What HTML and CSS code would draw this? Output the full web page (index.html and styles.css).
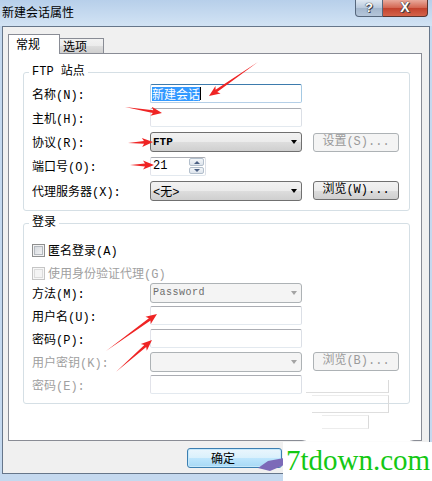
FILE: index.html
```html
<!DOCTYPE html>
<html lang="zh-CN">
<head>
<meta charset="utf-8">
<title>新建会话属性</title>
<link rel="stylesheet" href="styles.css">
</head>
<body>
<div class="titlebar">
  <span class="title">新建会话属性</span>
  <div class="caption">
    <div class="cbtn help">?</div>
    <div class="cbtn close">X</div>
  </div>
</div>
<div class="frame">
  <div class="tabs">
    <div class="tab active">常规</div>
    <div class="tab">选项</div>
  </div>
  <div class="panel">
    <div class="group g1">
      <div class="gtitle">FTP 站点</div>
      <div class="rows">
        <div class="row">
          <span class="lbl">名称(N):</span>
          <div class="tb focus"><span class="sel">新建会话</span><span class="caret"></span></div>
        </div>
        <div class="row">
          <span class="lbl">主机(H):</span>
          <div class="tb"></div>
        </div>
        <div class="row">
          <span class="lbl">协议(R):</span>
          <div class="dd"><span class="ddtext bold">FTP</span><span class="arrow"></span></div>
          <div class="btn disabled">设置(S)...</div>
        </div>
        <div class="row">
          <span class="lbl">端口号(O):</span>
          <div class="tb spin"><span class="num">21</span>
            <div class="spinbtns"><span class="sb up"></span><span class="sb down"></span></div>
          </div>
        </div>
        <div class="row">
          <span class="lbl">代理服务器(X):</span>
          <div class="dd"><span class="ddtext">&lt;无&gt;</span><span class="arrow"></span></div>
          <div class="btn">浏览(W)...</div>
        </div>
      </div>
    </div>
    <div class="group g2">
      <div class="gtitle">登录</div>
      <div class="cbrow first"><span class="cb"></span><span>匿名登录(A)</span></div>
      <div class="cbrow second disabled"><span class="cb"></span><span>使用身份验证代理(G)</span></div>
      <div class="rows tight">
        <div class="row">
          <span class="lbl">方法(M):</span>
          <div class="dd disabled"><span class="ddtext mono">Password</span><span class="arrow"></span></div>
        </div>
        <div class="row">
          <span class="lbl">用户名(U):</span>
          <div class="tb"></div>
        </div>
        <div class="row">
          <span class="lbl">密码(P):</span>
          <div class="tb"></div>
        </div>
        <div class="row disabled">
          <span class="lbl">用户密钥(K):</span>
          <div class="dd disabled"><span class="ddtext"></span><span class="arrow"></span></div>
          <div class="btn disabled">浏览(B)...</div>
        </div>
        <div class="row disabled">
          <span class="lbl">密码(E):</span>
          <div class="tb"></div>
        </div>
      </div>
    </div>
  </div>
  <div class="footer">
    <div class="okbtn">确定</div>
  </div>
</div>

<div class="ghost g-a"></div>
<div class="ghost g-b"></div>
<div class="ghost g-c"></div>
<div class="smudge"></div>

<svg class="arrows" width="432" height="481" viewBox="0 0 432 481">
  <g fill="#ef2424">
    <g transform="translate(209 96) rotate(145.2)"><path d="M0,0 L-11,-4.5 L-9,-1.4 L-59.6,0 L-9,1.4 L-11,4.5Z"/></g>
    <g transform="translate(162 113) rotate(9.2)"><path d="M0,0 L-11,-4.5 L-9,-1.4 L-37.5,0 L-9,1.4 L-11,4.5Z"/></g>
    <g transform="translate(153 142) rotate(-2.3)"><path d="M0,0 L-11,-4.5 L-9,-1.4 L-25,0 L-9,1.4 L-11,4.5Z"/></g>
    <g transform="translate(154 165) rotate(0)"><path d="M0,0 L-11,-4.5 L-9,-1.4 L-24,0 L-9,1.4 L-11,4.5Z"/></g>
    <g transform="translate(157 314) rotate(-36)"><path d="M0,0 L-11,-4.5 L-9,-1.4 L-63,0 L-9,1.4 L-11,4.5Z"/></g>
    <g transform="translate(152 340) rotate(-41.6)"><path d="M0,0 L-11,-4.5 L-9,-1.4 L-48,0 L-9,1.4 L-11,4.5Z"/></g>
  </g>
  <polygon points="258,468 268,461 284,458 284,465 270,471" fill="#7c6ab8"/>
</svg>
<div class="watermark">7tdown.com</div>
</body>
</html>
```
FILE: styles.css
```css
* { box-sizing: border-box; }
html, body { margin: 0; padding: 0; }
body {
  width: 432px;
  height: 481px;
  overflow: hidden;
  position: relative;
  background: #c5d9ef;
  font-family: "Liberation Mono", "Noto Sans CJK SC", monospace;
  font-size: 12px;
  color: #000;
}
.titlebar {
  height: 26px;
  display: flex;
  align-items: flex-start;
  background: linear-gradient(#b7cfea, #d2e3f4);
}
.title {
  font-family: "Noto Sans CJK SC", sans-serif;
  line-height: 23px;
  padding-left: 2px;
}
.caption {
  margin-left: auto;
  margin-right: 4px;
  display: flex;
  height: 17px;
}
.cbtn {
  height: 17px;
  border: 1px solid #56677c;
  border-top: none;
  font-family: "Liberation Sans", sans-serif;
  font-weight: bold;
  color: #fff;
  text-align: center;
  line-height: 15px;
  text-shadow: 0 0 1px #333, 0 0 1px #333, 1px 1px 0 #445;
}
.help {
  width: 28px;
  border-radius: 0 0 0 4px;
  background: linear-gradient(#dfe8f2, #b8c8db 50%, #a3b6cc 51%, #b5c6da);
  font-size: 13px;
}
.close {
  width: 45px;
  border-left: none;
  border-color: #5a3530;
  border-radius: 0 0 4px 0;
  background: linear-gradient(#e9aa9c, #d3644f 50%, #c2412c 51%, #d4634a);
  font-size: 14px;
}
.frame {
  margin: 0 2px;
  height: 448px;
  border: 1px solid #66768a;
  background: #f0f0f0;
}
.tabs {
  display: flex;
  align-items: flex-end;
  height: 26px;
  padding-left: 5px;
  font-family: "Noto Sans CJK SC", sans-serif;
}
.tab {
  border: 1px solid #898c95;
  border-bottom: none;
}
.tab.active {
  width: 52px;
  height: 20px;
  margin-bottom: -1px;
  background: #fff;
  position: relative;
  z-index: 1;
  padding-left: 7px;
  line-height: 18px;
}
.tab:not(.active) {
  width: 44px;
  height: 15px;
  padding-left: 3px;
  line-height: 14px;
  border-left: none;
  background: linear-gradient(#f2f2f2, #ebebeb 50%, #dddddd 51%, #cfcfcf);
}
.panel {
  margin-left: 5px;
  width: 414px;
  height: 388px;
  border: 1px solid #898c95;
  background: #fff;
  padding: 18px 0 0 14px;
}
.group {
  width: 387px;
  border: 1px solid #d5dfe5;
  border-radius: 3px;
  padding: 0 0 10px 8px;
}
.g2 { margin-top: 12px; padding-bottom: 9px; }
.gtitle {
  margin: -9px 0 0 -3px;
  padding: 0 3px;
  background: #fff;
  width: fit-content;
  line-height: 16px;
}
.rows {
  display: flex;
  flex-direction: column;
  gap: 5.25px;
  margin-top: 4px;
}
.rows.tight { gap: 4px; margin-top: 2px; }
.row {
  display: flex;
  align-items: center;
  height: 19px;
}
.lbl {
  width: 118px;
  flex: none;
  white-space: nowrap;
}
.row.disabled .lbl { color: #a0a0a0; }
.tb {
  width: 152px;
  height: 19px;
  border: 1px solid;
  border-color: #abadb3 #dbdfe6 #e3e9ef #e2e3ea;
  border-radius: 2px;
  background: #fff;
  display: flex;
  align-items: center;
  padding-left: 1px;
}
.tb.focus {
  border-color: #3d7bad #a4c9e3 #b5cfe7 #b5cfe7;
}
.sel {
  background: #3399ff;
  color: #fff;
  font-family: "Noto Sans CJK SC", sans-serif;
  line-height: 14px;
}
.caret {
  width: 1px;
  height: 13px;
  background: #000;
}
.dd {
  width: 152px;
  height: 20px;
  border: 1px solid #707070;
  border-radius: 3px;
  background: linear-gradient(#f2f2f2, #ebebeb 50%, #dddddd 51%, #cfcfcf);
  display: flex;
  align-items: center;
  justify-content: space-between;
  padding: 0 4px 0 2px;
}
.ddtext { font-size: 12px; }
.bold { font-weight: bold; font-size: 11px; }
.mono { font-size: 10px; color: #6d6d6d; letter-spacing: 0.5px; }
.arrow {
  width: 0;
  height: 0;
  border-left: 3.5px solid transparent;
  border-right: 3.5px solid transparent;
  border-top: 4px solid #000;
}
.dd.disabled {
  border-color: #adb2b5;
  background: #f4f4f4;
}
.dd.disabled .arrow { border-top-color: #a3a3a3; }
.btn {
  margin-left: 11px;
  width: 86px;
  height: 19px;
  border: 1px solid #707070;
  border-radius: 3px;
  background: linear-gradient(#f2f2f2, #ebebeb 50%, #dddddd 51%, #cfcfcf);
  text-align: center;
  line-height: 17px;
}
.btn.disabled {
  border-color: #adb2b5;
  background: #f4f4f4;
  color: #9a9a9a;
}
.spin {
  width: 56px;
  justify-content: space-between;
  padding: 0 1px 0 2px;
}
.num { font-size: 12px; }
.spinbtns {
  width: 15px;
  height: 16px;
  display: flex;
  flex-direction: column;
  gap: 1px;
}
.sb {
  flex: 1;
  border: 1px solid #b3bfcc;
  border-radius: 2px;
  background: linear-gradient(#f3f6f9, #dde4ec);
  display: flex;
  align-items: center;
  justify-content: center;
}
.sb::after {
  content: "";
  border-left: 3px solid transparent;
  border-right: 3px solid transparent;
}
.sb.up::after { border-bottom: 3px solid #4c6184; }
.sb.down::after { border-top: 3px solid #4c6184; }
.cbrow {
  display: flex;
  align-items: center;
  gap: 3px;
  height: 16px;
}
.cbrow.first { margin-top: 11px; }
.cbrow.second { margin-top: 7px; }
.cb {
  width: 13px;
  height: 13px;
  border: 1px solid #8e8f8f;
  background: linear-gradient(135deg, #cfd3d9, #f8f8f8);
  box-shadow: inset 0 0 0 1px #f2f2f2, inset 0 0 0 2px #b4b9bf;
}
.cbrow.disabled { color: #a0a0a0; }
.cbrow.disabled .cb {
  border-color: #c5c5c5;
  background: #f4f4f4;
  box-shadow: inset 0 0 0 1px #f7f7f7, inset 0 0 0 2px #dcdcdc;
}
.footer {
  padding: 7px 0 0 184px;
}
.okbtn {
  width: 95px;
  height: 20px;
  border: 1px solid #3c7fb1;
  border-radius: 3px;
  background: linear-gradient(#eaf6fd, #d9f0fc 50%, #bee6fd 51%, #a7d9f5);
  box-shadow: inset 0 0 0 1px #c5e8fb;
  font-family: "Noto Sans CJK SC", sans-serif;
  line-height: 18px;
  padding-left: 23px;
}
/* leftover marks from the watermark retouching, drawn over the panel */
.ghost {
  position: absolute;
  border-right: 1px solid #dadada;
  border-bottom: 1px solid #dedede;
  border-top: 1px solid #ececec;
}
.g-a { left: 306px; top: 380px; width: 83px; height: 13px; border-top: none; }
.g-b { left: 312px; top: 395px; width: 77px; height: 18px; }
.g-c { left: 322px; top: 415px; width: 47px; height: 14px; border-bottom-color: #ececec; }
.smudge {
  position: absolute;
  left: 306px;
  top: 436px;
  width: 104px;
  height: 5px;
  background: #fff;
  box-shadow: 0 0 3px 2px rgba(255, 255, 255, 0.9);
}
.arrows {
  position: absolute;
  left: 0;
  top: 0;
  pointer-events: none;
}
.watermark {
  position: absolute;
  left: 283px;
  top: 442px;
  width: 149px;
  height: 39px;
  background: #fff;
  color: #14c814;
  font-family: "Liberation Serif", serif;
  font-size: 29px;
  line-height: 37px;
  padding-left: 3px;
  white-space: nowrap;
}
```
